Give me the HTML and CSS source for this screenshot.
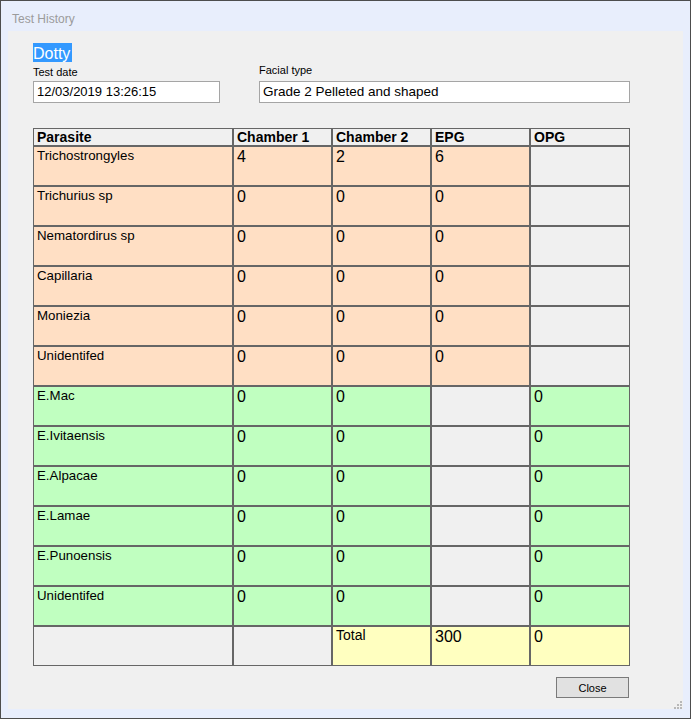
FILE: index.html
```html
<!DOCTYPE html>
<html lang="en">
<head>
<meta charset="utf-8">
<title>Test History</title>
<link rel="stylesheet" href="styles.css">
</head>
<body>
<div class="window">
  <div class="titlebar">Test History</div>
  <div class="client">
    <div class="name"><span class="sel">Dotty</span></div>
    <div class="fields">
      <div class="field date">
        <span class="lbl">Test date</span>
        <div class="textbox tb-date">12/03/2019 13:26:15</div>
      </div>
      <div class="field facial">
        <span class="lbl">Facial type</span>
        <div class="textbox tb-facial">Grade 2 Pelleted and shaped</div>
      </div>
    </div>

    <div class="grid">
      <div class="cell hdr">Parasite</div>
      <div class="cell hdr">Chamber 1</div>
      <div class="cell hdr">Chamber 2</div>
      <div class="cell hdr">EPG</div>
      <div class="cell hdr lc">OPG</div>

      <div class="cell peach">Trichostrongyles</div>
      <div class="cell peach num">4</div>
      <div class="cell peach num">2</div>
      <div class="cell peach num">6</div>
      <div class="cell empty lc"></div>

      <div class="cell peach">Trichurius sp</div>
      <div class="cell peach num">0</div>
      <div class="cell peach num">0</div>
      <div class="cell peach num">0</div>
      <div class="cell empty lc"></div>

      <div class="cell peach">Nematordirus sp</div>
      <div class="cell peach num">0</div>
      <div class="cell peach num">0</div>
      <div class="cell peach num">0</div>
      <div class="cell empty lc"></div>

      <div class="cell peach">Capillaria</div>
      <div class="cell peach num">0</div>
      <div class="cell peach num">0</div>
      <div class="cell peach num">0</div>
      <div class="cell empty lc"></div>

      <div class="cell peach">Moniezia</div>
      <div class="cell peach num">0</div>
      <div class="cell peach num">0</div>
      <div class="cell peach num">0</div>
      <div class="cell empty lc"></div>

      <div class="cell peach">Unidentifed</div>
      <div class="cell peach num">0</div>
      <div class="cell peach num">0</div>
      <div class="cell peach num">0</div>
      <div class="cell empty lc"></div>

      <div class="cell green">E.Mac</div>
      <div class="cell green num">0</div>
      <div class="cell green num">0</div>
      <div class="cell empty"></div>
      <div class="cell green num lc">0</div>

      <div class="cell green">E.Ivitaensis</div>
      <div class="cell green num">0</div>
      <div class="cell green num">0</div>
      <div class="cell empty"></div>
      <div class="cell green num lc">0</div>

      <div class="cell green">E.Alpacae</div>
      <div class="cell green num">0</div>
      <div class="cell green num">0</div>
      <div class="cell empty"></div>
      <div class="cell green num lc">0</div>

      <div class="cell green">E.Lamae</div>
      <div class="cell green num">0</div>
      <div class="cell green num">0</div>
      <div class="cell empty"></div>
      <div class="cell green num lc">0</div>

      <div class="cell green">E.Punoensis</div>
      <div class="cell green num">0</div>
      <div class="cell green num">0</div>
      <div class="cell empty"></div>
      <div class="cell green num lc">0</div>

      <div class="cell green">Unidentifed</div>
      <div class="cell green num">0</div>
      <div class="cell green num">0</div>
      <div class="cell empty"></div>
      <div class="cell green num lc">0</div>

      <div class="cell empty lr"></div>
      <div class="cell empty lr"></div>
      <div class="cell yellow lr total">Total</div>
      <div class="cell yellow num lr">300</div>
      <div class="cell yellow num lr lc">0</div>
    </div>

    <div class="actions">
      <button class="btn" type="button">Close</button>
    </div>

    <svg class="grip" width="9" height="9" viewBox="0 0 9 9" aria-hidden="true">
      <rect x="7" y="1" width="2" height="2" fill="#b8b8b8"/>
      <rect x="4" y="4" width="2" height="2" fill="#b8b8b8"/>
      <rect x="7" y="4" width="2" height="2" fill="#b8b8b8"/>
      <rect x="1" y="7" width="2" height="2" fill="#b8b8b8"/>
      <rect x="4" y="7" width="2" height="2" fill="#b8b8b8"/>
      <rect x="7" y="7" width="2" height="2" fill="#b8b8b8"/>
    </svg>
  </div>
</div>
</body>
</html>
```

FILE: styles.css
```css
html, body {
  margin: 0;
  padding: 0;
}

body {
  font-family: "Liberation Sans", Arial, sans-serif;
  color: #000;
  background: #e8eefc;
}

.window {
  width: 691px;
  height: 719px;
  box-sizing: border-box;
  border: 1px solid #4d4d4d;
  background: #e8eefc;
  display: flex;
  flex-direction: column;
}

.titlebar {
  height: 30px;
  box-sizing: border-box;
  padding: 11px 0 0 11px;
  font-size: 12px;
  line-height: 14px;
  color: #9b9b9b;
}

.client {
  position: relative;
  margin: 0 7px;
  height: 678px;
  box-sizing: border-box;
  background: #f0f0f0;
  padding: 12px 0 0 25px;
}

.name {
  height: 19px;
}

.sel {
  display: inline-block;
  height: 19px;
  box-sizing: border-box;
  padding: 2px 2px 0 0;
  font-size: 16px;
  line-height: 17px;
  background: #3399ff;
  color: #fff;
}

.fields {
  display: flex;
  gap: 39px;
  margin-top: 4px;
}

.field {
  display: flex;
  flex-direction: column;
}

.date {
  width: 187px;
}

.facial {
  width: 371px;
}

.lbl {
  font-size: 11px;
  line-height: 13px;
  margin-bottom: 2px;
}

.facial .lbl {
  margin-top: -2px;
  margin-bottom: 4px;
}

.textbox {
  height: 22px;
  box-sizing: border-box;
  border: 1px solid #a5a5a5;
  background: #fff;
  padding: 0 3px;
  line-height: 20px;
  font-size: 13px;
  white-space: nowrap;
}

.tb-facial {
  font-size: 13.5px;
}

.grid {
  margin-top: 25px;
  width: 597px;
  box-sizing: border-box;
  display: grid;
  grid-template-columns: 200px 99px 99px 99px 99px;
  grid-template-rows: 18px repeat(12, 40px) 39px;
  border-top: 1px solid #666;
  border-left: 1px solid #666;
}

.cell {
  box-sizing: border-box;
  border-right: 2px solid #666;
  border-bottom: 2px solid #666;
  padding: 1px 3px 0;
  font-size: 13.3px;
  line-height: 15px;
  overflow: hidden;
  white-space: nowrap;
}

.cell.lc {
  border-right-width: 1px;
}

.cell.lr {
  border-bottom-width: 1px;
}

.hdr {
  background: #f0f0f0;
  font-weight: bold;
  font-size: 14px;
  padding-top: 0;
  line-height: 16px;
}

.num {
  font-size: 16px;
  line-height: 18px;
}

.total {
  font-size: 14px;
}

.peach {
  background: #ffdfc4;
}

.green {
  background: #c0ffc0;
}

.yellow {
  background: #ffffc0;
}

.empty {
  background: #f0f0f0;
}

.actions {
  width: 597px;
  display: flex;
  justify-content: flex-end;
  margin-top: 11px;
}

.btn {
  width: 73px;
  height: 21px;
  margin: 0 1px 0 0;
  padding: 0;
  border: 1px solid #7a7a7a;
  border-radius: 0;
  background: #e1e1e1;
  font-family: "Liberation Sans", Arial, sans-serif;
  font-size: 11px;
  color: #000;
}

.grip {
  position: absolute;
  right: 1px;
  bottom: 0;
}
```
